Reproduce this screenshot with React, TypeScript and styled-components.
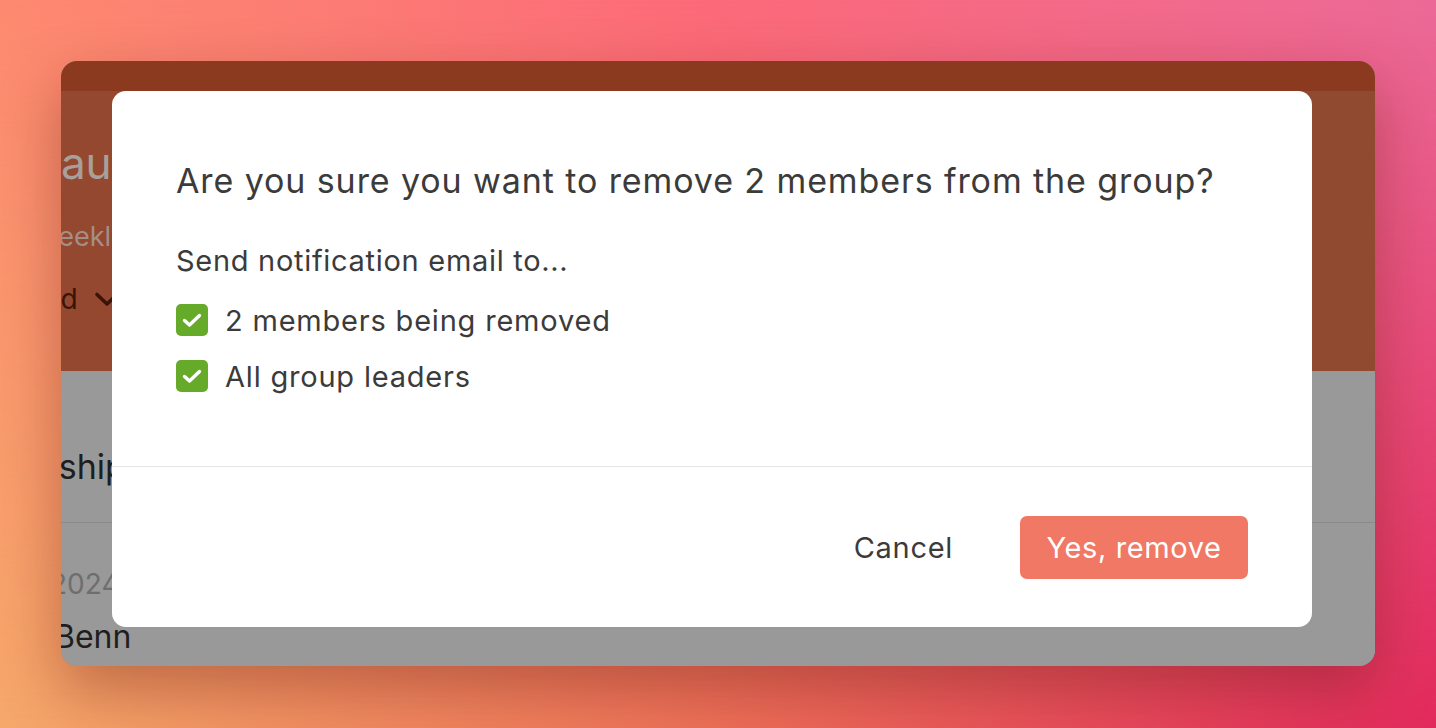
import styled, { createGlobalStyle } from "styled-components";
import { useState } from "react";

const GlobalStyle = createGlobalStyle`
  html, body {
    margin: 0;
    padding: 0;
  }
  body {
    font-family: Inter, "Noto Sans", sans-serif;
    -webkit-font-smoothing: antialiased;
  }
`;

const recipients = [
  { id: "removed", label: "2 members being removed" },
  { id: "leaders", label: "All group leaders" },
];

const CheckIcon = () => (
  <svg width="22" height="22" viewBox="0 0 22 22" fill="none">
    <polyline
      points="3.5,11.5 8.5,16 18.5,6.5"
      stroke="#fff"
      strokeWidth="3.4"
      strokeLinecap="round"
      strokeLinejoin="round"
    />
  </svg>
);

const Chevron = () => (
  <svg width="26" height="16" viewBox="0 0 26 16" fill="none">
    <polyline
      points="3,3.5 13,13 23,3.5"
      stroke="#3a1408"
      strokeWidth="3.6"
      strokeLinecap="round"
      strokeLinejoin="round"
    />
  </svg>
);

const App = () => {
  const [checked, setChecked] = useState<Record<string, boolean>>({
    removed: true,
    leaders: true,
  });

  const toggle = (id: string) => {
    setChecked((prev) => ({ ...prev, [id]: !prev[id] }));
  };

  return (
    <>
      <GlobalStyle />
      <S.Page>
        <S.Window>
          <S.TopBar />
          <S.Header>
            <S.GroupTitle>Launch Team</S.GroupTitle>
            <S.GroupMeta>Weekly meetup</S.GroupMeta>
            <S.Joined>
              Joined <Chevron />
            </S.Joined>
          </S.Header>
          <S.Body>
            <S.SectionRow>
              <S.SectionTitle>Membership</S.SectionTitle>
            </S.SectionRow>
            <S.MemberRow>
              <S.MemberDate>2024</S.MemberDate>
              <S.MemberName>Benn</S.MemberName>
            </S.MemberRow>
          </S.Body>

          <S.Modal>
            <S.ModalBody>
              <S.Title>
                Are you sure you want to remove 2 members from the group?
              </S.Title>
              <S.Subtitle>Send notification email to...</S.Subtitle>
              <S.CheckList>
                {recipients.map((r) => (
                  <S.CheckRow key={r.id} onClick={() => toggle(r.id)}>
                    <S.Box $checked={checked[r.id]}>
                      {checked[r.id] && <CheckIcon />}
                    </S.Box>
                    {r.label}
                  </S.CheckRow>
                ))}
              </S.CheckList>
            </S.ModalBody>
            <S.Footer>
              <S.CancelButton>Cancel</S.CancelButton>
              <S.DangerButton>Yes, remove</S.DangerButton>
            </S.Footer>
          </S.Modal>
        </S.Window>
      </S.Page>
    </>
  );
};
export default App;

const Page = styled.div`
  position: relative;
  width: 100vw;
  height: 100vh;
  box-sizing: border-box;
  padding: 61px 61px 0;
  overflow: hidden;
  background: linear-gradient(to right, #fd8a70 0%, #fc6a7a 50%, #ec6a98 100%);

  &::before {
    content: "";
    position: absolute;
    inset: 0;
    background: linear-gradient(to right, #f6a86a 0%, #ee7058 50%, #e22a5c 100%);
    -webkit-mask-image: linear-gradient(to bottom, transparent 0%, #000 100%);
    mask-image: linear-gradient(to bottom, transparent 0%, #000 100%);
  }
`;

const Window = styled.div`
  position: relative;
  width: 1314px;
  height: 605px;
  border-radius: 16px;
  overflow: hidden;
  background: #999999;
  box-shadow: 0 24px 60px rgba(90, 20, 10, 0.35);
  display: flex;
  flex-direction: column;
`;

const TopBar = styled.div`
  height: 30px;
  flex-shrink: 0;
  background: #8b3a20;
`;

const Header = styled.div`
  height: 280px;
  flex-shrink: 0;
  box-sizing: border-box;
  padding: 44px 0 0;
  background: linear-gradient(to right, #94482f, #8f4a30);
  display: flex;
  flex-direction: column;
`;

const GroupTitle = styled.div`
  margin-left: -25px;
  font-size: 44px;
  line-height: 56px;
  color: #a8a09c;
  white-space: nowrap;
`;

const GroupMeta = styled.div`
  margin-top: 29px;
  margin-left: -28px;
  font-size: 27px;
  line-height: 34px;
  color: #a48f88;
  white-space: nowrap;
`;

const Joined = styled.div`
  margin-top: 28px;
  margin-left: -73px;
  display: flex;
  align-items: center;
  gap: 16px;
  font-size: 28px;
  line-height: 34px;
  color: #3a1408;
  white-space: nowrap;
`;

const Body = styled.div`
  flex: 1;
  display: flex;
  flex-direction: column;
  background: #999999;
`;

const SectionRow = styled.div`
  height: 152px;
  box-sizing: border-box;
  padding-top: 76px;
  border-bottom: 1px solid #8a8a8a;
`;

const SectionTitle = styled.div`
  margin-left: -136px;
  font-size: 34px;
  line-height: 40px;
  color: #1e1e1e;
  white-space: nowrap;
`;

const MemberRow = styled.div`
  padding-top: 44px;
  display: flex;
  flex-direction: column;
  gap: 16px;
`;

const MemberDate = styled.div`
  margin-left: -11px;
  font-size: 28px;
  line-height: 34px;
  color: #6e6e6e;
`;

const MemberName = styled.div`
  margin-left: -7px;
  font-size: 32px;
  line-height: 40px;
  color: #1e1e1e;
`;

const Modal = styled.div`
  position: absolute;
  top: 30px;
  left: 51px;
  width: 1200px;
  height: 536px;
  box-sizing: border-box;
  background: #ffffff;
  border-radius: 14px;
  display: flex;
  flex-direction: column;
`;

const ModalBody = styled.div`
  padding: 70px 64px 74px;
  border-bottom: 1px solid #e6e6e6;
  color: #3b3b3b;
`;

const Title = styled.h3`
  margin: 0;
  font-size: 34px;
  line-height: 40px;
  font-weight: 400;
  letter-spacing: 0.9px;
  white-space: nowrap;
`;

const Subtitle = styled.div`
  margin-top: 42px;
  font-size: 29px;
  line-height: 36px;
  letter-spacing: 0.7px;
`;

const CheckList = styled.div`
  margin-top: 25px;
  display: flex;
  flex-direction: column;
  gap: 24px;
`;

const CheckRow = styled.label`
  display: flex;
  align-items: center;
  gap: 17px;
  height: 32px;
  font-size: 29px;
  letter-spacing: 0.8px;
  cursor: pointer;
`;

const Box = styled.span<{ $checked?: boolean }>`
  width: 32px;
  height: 32px;
  flex-shrink: 0;
  border-radius: 5px;
  box-sizing: border-box;
  display: flex;
  align-items: center;
  justify-content: center;
  background: ${({ $checked }) => ($checked ? "#66aa2a" : "#fff")};
  border: ${({ $checked }) => ($checked ? "none" : "2px solid #bbb")};
`;

const Footer = styled.div`
  flex: 1;
  display: flex;
  align-items: center;
  justify-content: flex-end;
  gap: 41px;
  padding: 0 64px;
`;

const CancelButton = styled.button`
  height: 63px;
  padding: 0 26px;
  border: none;
  background: transparent;
  font-family: inherit;
  font-size: 29px;
  letter-spacing: 0.7px;
  color: #3b3b3b;
  cursor: pointer;
`;

const DangerButton = styled.button`
  height: 63px;
  width: 228px;
  border: none;
  border-radius: 7px;
  background: #f07865;
  font-family: inherit;
  font-size: 29px;
  letter-spacing: 0.6px;
  color: #ffffff;
  cursor: pointer;
`;

const S = {
  Page,
  Window,
  TopBar,
  Header,
  GroupTitle,
  GroupMeta,
  Joined,
  Body,
  SectionRow,
  SectionTitle,
  MemberRow,
  MemberDate,
  MemberName,
  Modal,
  ModalBody,
  Title,
  Subtitle,
  CheckList,
  CheckRow,
  Box,
  Footer,
  CancelButton,
  DangerButton,
};
